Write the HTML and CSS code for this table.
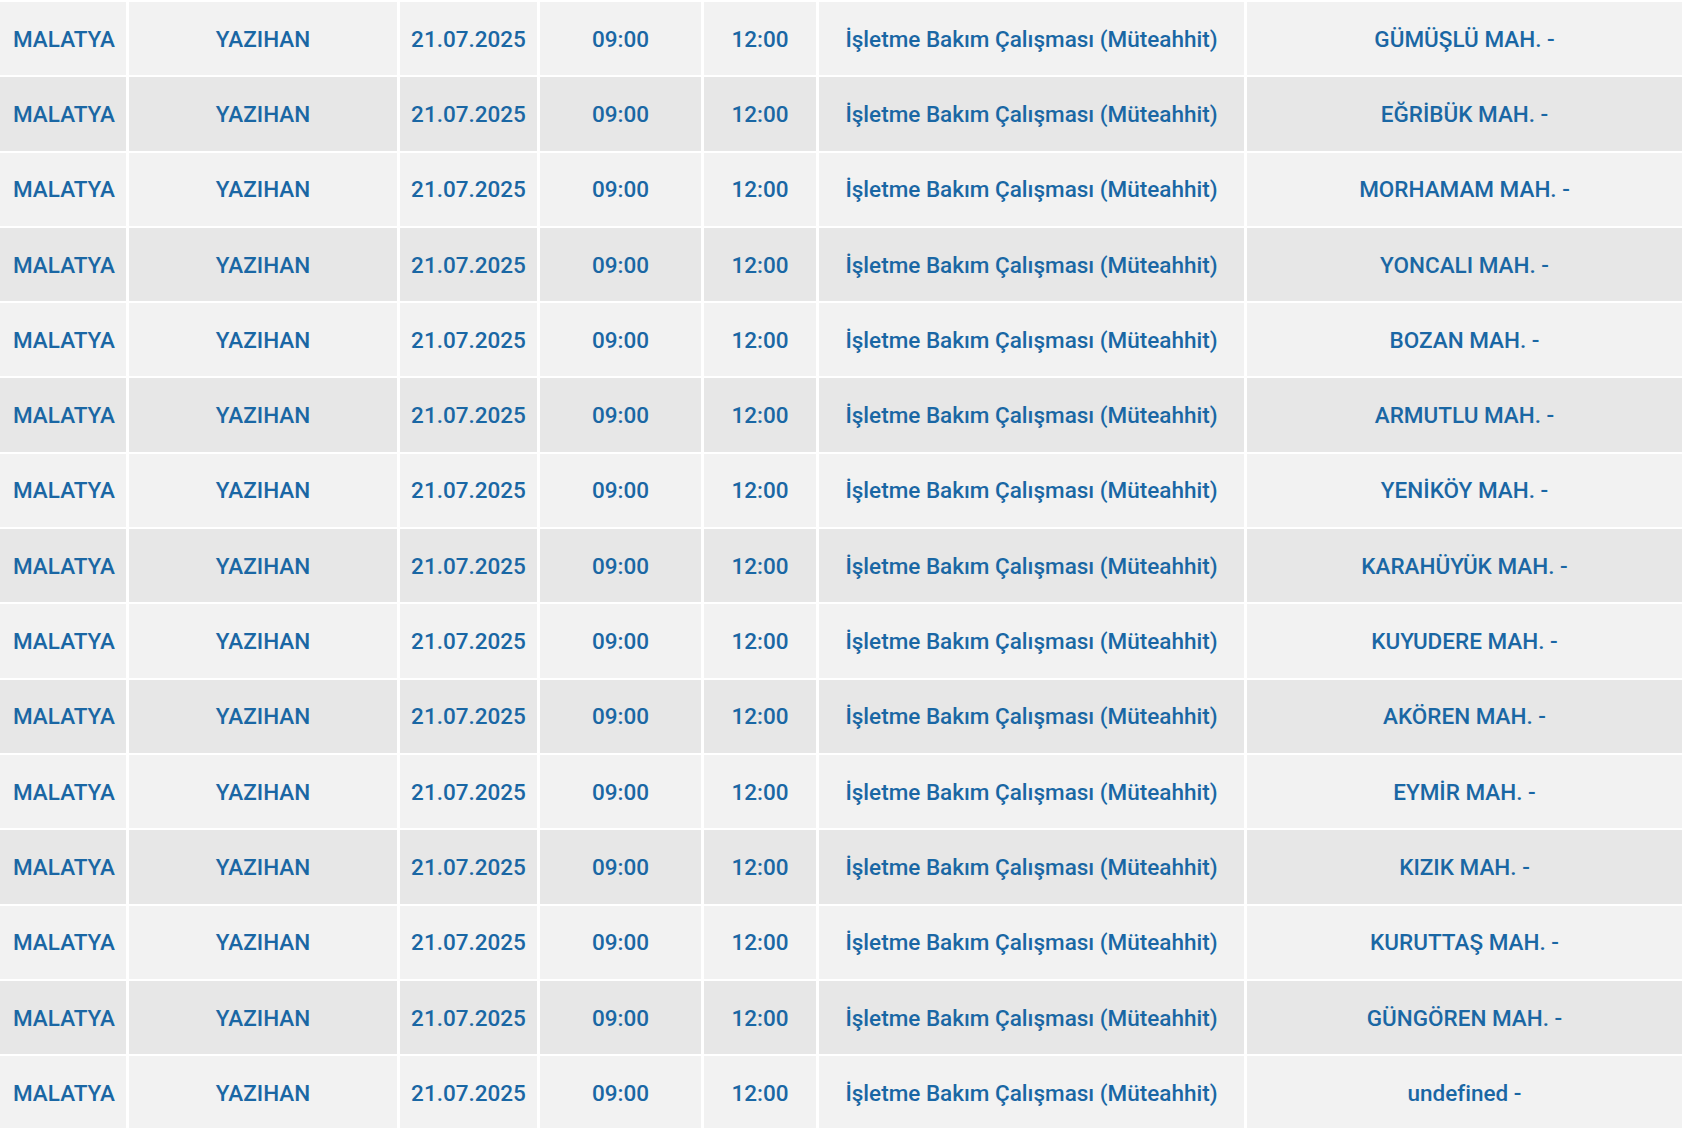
FILE: index.html
```html
<!DOCTYPE html>
<html lang="tr">
<head>
<meta charset="utf-8">
<title>Kesinti Listesi</title>
<link rel="stylesheet" href="styles.css">
</head>
<body>
<div class="table">
  <div class="row"><div class="cell il">MALATYA</div><div class="cell">YAZIHAN</div><div class="cell">21.07.2025</div><div class="cell">09:00</div><div class="cell">12:00</div><div class="cell">İşletme Bakım Çalışması (Müteahhit)</div><div class="cell">GÜMÜŞLÜ MAH. -</div></div>
  <div class="row"><div class="cell il">MALATYA</div><div class="cell">YAZIHAN</div><div class="cell">21.07.2025</div><div class="cell">09:00</div><div class="cell">12:00</div><div class="cell">İşletme Bakım Çalışması (Müteahhit)</div><div class="cell">EĞRİBÜK MAH. -</div></div>
  <div class="row"><div class="cell il">MALATYA</div><div class="cell">YAZIHAN</div><div class="cell">21.07.2025</div><div class="cell">09:00</div><div class="cell">12:00</div><div class="cell">İşletme Bakım Çalışması (Müteahhit)</div><div class="cell">MORHAMAM MAH. -</div></div>
  <div class="row"><div class="cell il">MALATYA</div><div class="cell">YAZIHAN</div><div class="cell">21.07.2025</div><div class="cell">09:00</div><div class="cell">12:00</div><div class="cell">İşletme Bakım Çalışması (Müteahhit)</div><div class="cell">YONCALI MAH. -</div></div>
  <div class="row"><div class="cell il">MALATYA</div><div class="cell">YAZIHAN</div><div class="cell">21.07.2025</div><div class="cell">09:00</div><div class="cell">12:00</div><div class="cell">İşletme Bakım Çalışması (Müteahhit)</div><div class="cell">BOZAN MAH. -</div></div>
  <div class="row"><div class="cell il">MALATYA</div><div class="cell">YAZIHAN</div><div class="cell">21.07.2025</div><div class="cell">09:00</div><div class="cell">12:00</div><div class="cell">İşletme Bakım Çalışması (Müteahhit)</div><div class="cell">ARMUTLU MAH. -</div></div>
  <div class="row"><div class="cell il">MALATYA</div><div class="cell">YAZIHAN</div><div class="cell">21.07.2025</div><div class="cell">09:00</div><div class="cell">12:00</div><div class="cell">İşletme Bakım Çalışması (Müteahhit)</div><div class="cell">YENİKÖY MAH. -</div></div>
  <div class="row"><div class="cell il">MALATYA</div><div class="cell">YAZIHAN</div><div class="cell">21.07.2025</div><div class="cell">09:00</div><div class="cell">12:00</div><div class="cell">İşletme Bakım Çalışması (Müteahhit)</div><div class="cell">KARAHÜYÜK MAH. -</div></div>
  <div class="row"><div class="cell il">MALATYA</div><div class="cell">YAZIHAN</div><div class="cell">21.07.2025</div><div class="cell">09:00</div><div class="cell">12:00</div><div class="cell">İşletme Bakım Çalışması (Müteahhit)</div><div class="cell">KUYUDERE MAH. -</div></div>
  <div class="row"><div class="cell il">MALATYA</div><div class="cell">YAZIHAN</div><div class="cell">21.07.2025</div><div class="cell">09:00</div><div class="cell">12:00</div><div class="cell">İşletme Bakım Çalışması (Müteahhit)</div><div class="cell">AKÖREN MAH. -</div></div>
  <div class="row"><div class="cell il">MALATYA</div><div class="cell">YAZIHAN</div><div class="cell">21.07.2025</div><div class="cell">09:00</div><div class="cell">12:00</div><div class="cell">İşletme Bakım Çalışması (Müteahhit)</div><div class="cell">EYMİR MAH. -</div></div>
  <div class="row"><div class="cell il">MALATYA</div><div class="cell">YAZIHAN</div><div class="cell">21.07.2025</div><div class="cell">09:00</div><div class="cell">12:00</div><div class="cell">İşletme Bakım Çalışması (Müteahhit)</div><div class="cell">KIZIK MAH. -</div></div>
  <div class="row"><div class="cell il">MALATYA</div><div class="cell">YAZIHAN</div><div class="cell">21.07.2025</div><div class="cell">09:00</div><div class="cell">12:00</div><div class="cell">İşletme Bakım Çalışması (Müteahhit)</div><div class="cell">KURUTTAŞ MAH. -</div></div>
  <div class="row"><div class="cell il">MALATYA</div><div class="cell">YAZIHAN</div><div class="cell">21.07.2025</div><div class="cell">09:00</div><div class="cell">12:00</div><div class="cell">İşletme Bakım Çalışması (Müteahhit)</div><div class="cell">GÜNGÖREN MAH. -</div></div>
  <div class="row"><div class="cell il">MALATYA</div><div class="cell">YAZIHAN</div><div class="cell">21.07.2025</div><div class="cell">09:00</div><div class="cell">12:00</div><div class="cell">İşletme Bakım Çalışması (Müteahhit)</div><div class="cell">undefined -</div></div>
</div>
</body>
</html>
```

FILE: styles.css
```css
html, body {
  margin: 0;
  padding: 0;
  background: #ffffff;
}

body {
  font-family: Roboto, "Liberation Sans", Arial, sans-serif;
  font-weight: 500;
  font-size: 22.5px;
  color: #1a67a4;
}

.table {
  display: flex;
  flex-direction: column;
  gap: 2px;
  padding-top: 2px;
}

.row {
  display: grid;
  grid-template-columns: 126px 268px 137px 161px 112px 425px 1fr;
  column-gap: 3px;
  height: 73.3px;
}

.row:nth-child(odd) .cell {
  background: #f2f2f2;
}

.row:nth-child(even) .cell {
  background: #e7e7e7;
}

.cell {
  display: flex;
  align-items: center;
  justify-content: center;
  white-space: nowrap;
}

.cell.il {
  justify-content: flex-start;
  padding-left: 13px;
}
```
